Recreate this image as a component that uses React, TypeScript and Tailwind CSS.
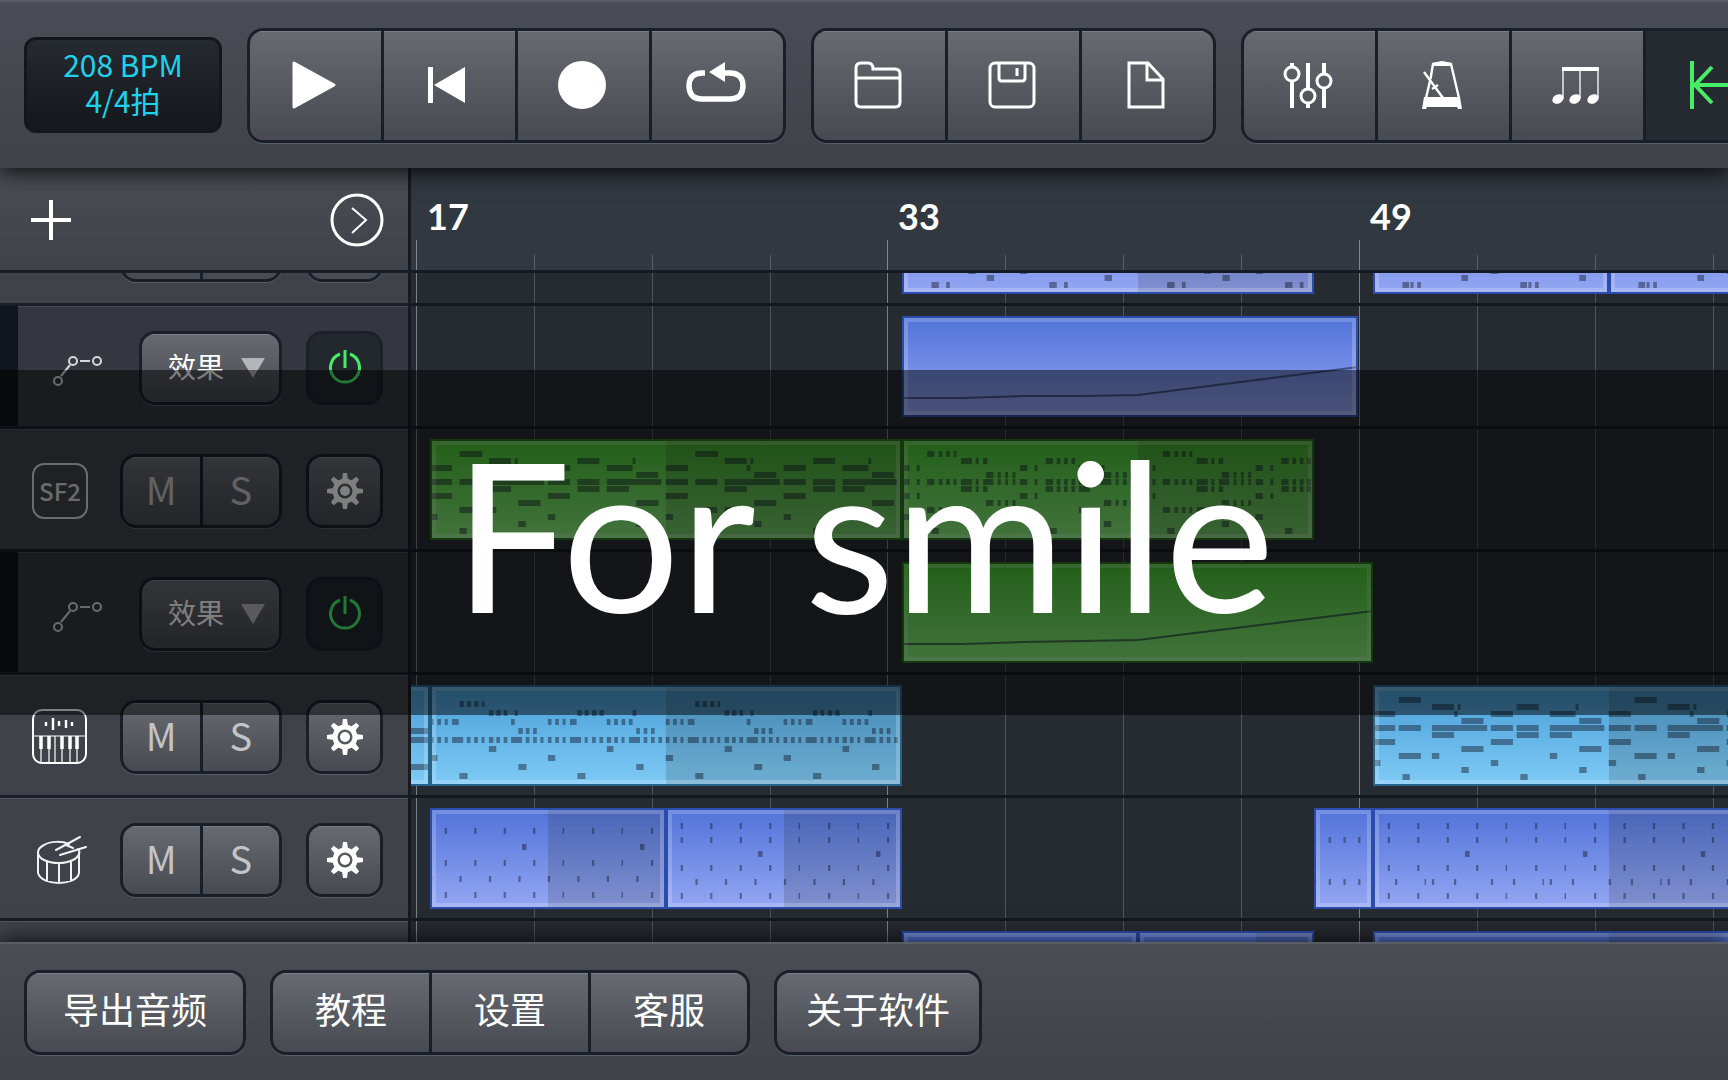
import type { ReactNode } from "react";
import clsx from "clsx";

// one step is a sixteenth of a grid cell; the grid draws a line every 16 steps
const STEP = 7.3667;
const GRID_START = 5;
const CLIP_HEIGHT = 101;

type Color = "blue" | "green" | "cyan";

interface Clip {
  start: number;
  width: number;
  color: Color;
  shadeFrom?: number;
  rows?: string[];
  firstRow?: number;
  rowGap?: number;
  curve?: string;
}

interface Track {
  kind: "sf2" | "piano" | "drum" | "effect";
  clips: Clip[];
}

// each string is one pitch: "step:length step:length ..." over 32 steps
const melody = [
  "4:3.1",
  "8:3 11.5:0.4 20:3 27.5:0.4",
  "0:3 11:0.5 16:3 24:3.5",
  "12:3 28:3",
  "0:3 4:3 8:7.5 16:3 20:3 24:7.4",
  "8:3 20:3 24:3",
  "0:3 16:3",
  "12:3 28:3",
  "4:3 8:1 24:1",
  "0:1 16:1",
  "12:1 28:1",
  "4:1 20:1",
];

const melodyEarly = [
  "3.5:3",
  "8:3 11.5:0.4 19.5:3 27.5:0.4",
  "0:3 11:0.5 16:3 24:3.5",
  "12:3 28:3",
  "0:3 3.5:3 8:7.5 16:3 19.5:3 24:7.4",
  "8:3 19.5:3 24:3",
  "0:3 16:3",
  "12:3 28:3",
  "3.5:3 8:1 24:1",
  "0:1 16:1",
  "12:1 28:1",
  "4:1 20:1",
];

const chopped = [
  "3.4:1 5:0.5 6:0.5 7:0.4",
  "8:1.5 10:0.4 11:0.6 19.5:1 21:0.5 22:0.5 23:0.5",
  "0:1 2:0.4 16:1 18:0.4 24:1.5 26:0.5 27:0.5",
  "11.4:1 13:0.4 14:0.4 15:0.4 27.4:1 29:0.4 30:0.5 31:0.5",
  "0:1 2:0.4 3.4:1 5:0.5 6:0.5 7:0.4 8:1.5 10:0.4 11:1.4 13:0.4 14:0.4 15:0.4 16:1 18:0.4 19.5:1 21:0.5 22:0.5 23:0.5 24:1.5 26:0.5 27:1.4 29:0.4 30:0.5 31:0.5",
  "8:1.5 10:0.4 11:0.6 19.5:1 21:0.5 22:0.5 23:0.5 24:1.5",
  "0:1 2:0.4 16:1 18:0.4",
  "11.4:1 13:0.4 14:0.4 15:0.4 27.4:1 29:0.4 30:0.5 31:0.5",
  "3.4:1 5:0.5 6:0.5 7:0.4 8:1 24:1",
  "0:1 16:1",
  "11.4:1 27.4:1",
  "4:1 20:1",
];

const arp = [
  "4:0.6 5:0.6 6:0.6 7:0.4",
  "8:0.6 9:0.6 10:0.5 11.5:0.4 20:0.6 21:0.5 22:0.6 23:0.6 27.5:0.5",
  "0:0.5 1:0.5 2:0.4 3:0.9 11:0.5 16:0.5 17:0.5 18:0.4 19:0.9 24:0.5 25:0.5 26:0.5 27:0.5",
  "12:0.6 13:0.5 14:0.5 28:0.5 29:0.5 30:0.5",
  "0:0.5 1:0.5 2:0.4 3:1.5 5:0.5 6:0.5 7:0.4 8:0.6 9:0.5 10:0.5 11:1.5 13:0.5 14:0.5 15:0.4 16:0.5 17:0.5 18:0.4 19:1.5 21:0.4 22:0.5 23:0.5 24:0.6 25:0.5 26:0.4 27:1.5 29:0.5 30:0.5 31:0.5",
  "8:1 24:0.9",
  "0:1 16:1",
  "12:1.1 28:1",
  "4:1.1 20:1.1",
];

const sparse = ["", "", "", "", "", "", "", "", "", "9:1 16:1", "11.5:1 27.5:1", "4:1 6:0.5 20:1 22:0.5"];
const sparseTriple = ["", "", "", "", "", "", "", "", "", "16:1", "12:0.9 28:0.9", "4:0.9 5.1:0.4 6:0.5 20:0.9 21.1:0.4 22:0.5"];

const offbeat = "2:0.3 6:0.3 10:0.3 14:0.3 18:0.2 22:0.3 26:0.2 30:0.3";
const onbeat = "0:0.3 4:0.3 8:0.3 12:0.3 16:0.3 20:0.3 24:0.3 28:0.3";
const snare = "12.5:0.6 28.5:0.6";
const drumsA = [offbeat, snare, offbeat, onbeat, offbeat];
const drumsB = [offbeat, offbeat, snare, offbeat, onbeat, offbeat];
const drumsFill = ["", "0:0.3 2:0.3 4:0.3 6:0.3", "", "", "0:0.3 2:0.3 4:0.3 6:0.3", ""];
const drumsC = [offbeat, offbeat, snare, offbeat, "0:0.3 3:0.3 7:0.2 8:0.3 11:0.3 16:0.3 19:0.3 23:0.2 24:0.3 27:0.3", offbeat];

const tracks: Track[] = [
  {
    kind: "sf2",
    clips: [
      { start: 491, width: 412, color: "blue", shadeFrom: 236, rows: sparse },
      { start: 962, width: 236, color: "blue", rows: sparseTriple },
      { start: 1198, width: 472, color: "blue", rows: sparseTriple },
    ],
  },
  {
    kind: "effect",
    clips: [{ start: 491, width: 456, color: "blue", curve: "M0 82 L60 82 L120 80 L180 80 L236 79 L456 51" }],
  },
  {
    kind: "sf2",
    clips: [
      { start: 19, width: 472, color: "green", shadeFrom: 236, rows: melody },
      { start: 491, width: 412, color: "green", shadeFrom: 236, rows: chopped },
    ],
  },
  {
    kind: "effect",
    clips: [{ start: 491, width: 471, color: "green", curve: "M0 82 L60 82 L120 80 L180 79 L236 78 L471 49" }],
  },
  {
    kind: "piano",
    clips: [
      { start: -453, width: 472, color: "cyan", rows: ["", "", "", "44:20", "44:20", "", "", "44:20"], firstRow: 19, rowGap: 9 },
      { start: 19, width: 472, color: "cyan", shadeFrom: 236, rows: arp, firstRow: 19, rowGap: 9 },
      { start: 962, width: 472, color: "cyan", shadeFrom: 236, rows: melodyEarly },
    ],
  },
  {
    kind: "drum",
    clips: [
      { start: 19, width: 236, color: "blue", shadeFrom: 118, rows: drumsA, firstRow: 23, rowGap: 16 },
      { start: 255, width: 236, color: "blue", shadeFrom: 118, rows: drumsB, firstRow: 18, rowGap: 14 },
      { start: 903, width: 59, color: "blue", rows: drumsFill, firstRow: 18, rowGap: 14 },
      { start: 962, width: 472, color: "blue", shadeFrom: 236, rows: drumsC, firstRow: 18, rowGap: 14 },
    ],
  },
  {
    kind: "sf2",
    clips: [
      { start: 491, width: 236, color: "blue" },
      { start: 727, width: 176, color: "blue", shadeFrom: 118 },
      { start: 962, width: 472, color: "blue", shadeFrom: 236 },
    ],
  },
];

const clipStyles: Record<Color, string> = {
  blue: "border-[#2c4cab] bg-linear-to-b from-[#5273d9] to-[#94a6f3]",
  green: "border-[#27701a] bg-linear-to-b from-[#46c030] to-[#84e678]",
  cyan: "border-[#24638c] bg-linear-to-b from-[#489fd8] to-[#7ecaf5]",
};

const face = "bg-linear-to-b from-[#686a71] to-[#474a51] shadow-[inset_0_1px_0_#7d7f86]";
const frame = "flex shrink-0 gap-[3px] overflow-hidden rounded-2xl border-[3px] border-[#191f28] bg-[#191f28] shadow-[0_1px_0_#5a5d64]";

function Icon({ size = 48, children, className }: { size?: number; children: ReactNode; className?: string }) {
  return (
    <svg
      width={size}
      height={size}
      viewBox={`0 0 ${size} ${size}`}
      fill="none"
      stroke="currentColor"
      strokeWidth={3}
      className={clsx("shrink-0 overflow-visible", className)}
      aria-hidden="true"
    >
      {children}
    </svg>
  );
}

const icons = {
  play: (
    <Icon>
      <path d="M4 2 V46 L44 24 Z" fill="currentColor" strokeLinejoin="round" />
    </Icon>
  ),
  rewind: (
    <Icon>
      <path d="M4 6 H9 V42 H4 Z M10 24 L41 6 V42 Z" fill="currentColor" stroke="none" />
    </Icon>
  ),
  record: (
    <Icon>
      <circle cx="24" cy="24" r="24" fill="currentColor" stroke="none" />
    </Icon>
  ),
  loop: (
    <Icon>
      <path d="M13 12 H10 C1 12 -3 17 -3 25 S1 38 10 38 H38 C47 38 51 33 51 25 S47 12 38 12 H30" strokeWidth={5.5} />
      <path d="M17 11 L33 1 V21 Z" fill="currentColor" stroke="none" />
    </Icon>
  ),
  folder: (
    <Icon>
      <path d="M2 7 Q2 2 7 2 H14 Q19 2 19 8 H41 Q46 8 46 13 V41 Q46 46 41 46 H7 Q2 46 2 41 Z M2 17 H46" />
    </Icon>
  ),
  save: (
    <Icon>
      <rect x="2" y="2" width="44" height="44" rx="5" />
      <path d="M11 2 V17 Q11 20 14 20 H34 Q37 20 37 17 V2 M29 7 V15" />
    </Icon>
  ),
  file: (
    <Icon>
      <path d="M7 2 H26 L41 18 V46 H7 Z M25 2 V19 H41" />
    </Icon>
  ),
  mixer: (
    <Icon>
      <path d="M8 2 V6 M8 20 V47 M24 2 V28 M24 42 V47 M40 2 V13 M40 27 V47" strokeWidth={4} />
      <circle cx="8" cy="13" r="7" />
      <circle cx="24" cy="35" r="7" />
      <circle cx="40" cy="20" r="7" />
    </Icon>
  ),
  metronome: (
    <Icon>
      <path d="M12 20 L8 37 M12.5 18 L15 3 L24 2 L33 3 L41 37" strokeWidth={2.4} />
      <path d="M14 2 L24 0 L34 2 V5 H14 Z M6 36 H42 L44 48 H40 L39 46 H9 L8 48 H4 Z" fill="currentColor" stroke="none" />
      <path d="M6 11 L25 37 M14 28 L20 24" strokeWidth={2.4} />
    </Icon>
  ),
  triplet: (
    <Icon>
      <path d="M10 6 H47 V10 H10 Z" fill="currentColor" stroke="none" />
      <path d="M11 8 V37 M28 8 V37 M46 8 V37" strokeWidth={1.3} />
      <g fill="currentColor" stroke="none">
        <ellipse cx="6" cy="38" rx="6" ry="4.4" transform="rotate(-28 6 38)" />
        <ellipse cx="23" cy="38" rx="6" ry="4.4" transform="rotate(-28 23 38)" />
        <ellipse cx="41" cy="38" rx="6" ry="4.4" transform="rotate(-28 41 38)" />
      </g>
    </Icon>
  ),
  snap: (
    <Icon>
      <path d="M6 0 V48 M9 24 H48 M26 6 L9 24 L26 42" strokeWidth={4} />
    </Icon>
  ),
  gear: (
    <Icon size={36}>
      <circle cx="18" cy="18" r="10" strokeWidth={5} />
      <circle cx="18" cy="18" r="5" fill="currentColor" stroke="none" />
      {[0, 45, 90, 135, 180, 225, 270, 315].map((angle) => (
        <path key={angle} d="M15 7 L16 0 H20 L21 7 Z" fill="currentColor" stroke="none" transform={`rotate(${angle} 18 18)`} />
      ))}
    </Icon>
  ),
  power: (
    <Icon size={36}>
      <path d="M13 4 A14.5 14.5 0 1 0 23 4 M18 0 V18" />
    </Icon>
  ),
  curve: (
    <Icon size={56} className="text-[#d5d7da]">
      <g strokeWidth={2}>
        <circle cx="8" cy="41" r="4" />
        <circle cx="23" cy="21" r="4" />
        <circle cx="47" cy="21" r="4" />
        <path d="M11 36 L20 25 M30 21 H40" />
      </g>
    </Icon>
  ),
  piano: (
    <Icon size={56} className="text-white">
      <rect x="1" y="1" width="53" height="53" rx="9" strokeWidth={2} />
      <path d="M1 27 H54 M9 27 V53 M17 27 V53 M23 27 V53 M30 27 V53 M38 27 V53 M45 27 V53" strokeWidth={1.2} />
      <path d="M9 27 V40 M17 27 V40 M30 27 V40 M38 27 V40 M45 27 V40" strokeWidth={3.5} />
      <path d="M14 13 V17 M21 9 V21 M27 12 V17 M34 11 V19 M40 13 V17" strokeWidth={2.4} />
    </Icon>
  ),
  drum: (
    <Icon size={56} className="text-[#f0f1f2]">
      <g strokeWidth={2} strokeLinecap="round">
        <path d="M37 12 C30 9 18 9 12 13 C4 17 4 24 12 28 C20 32 33 32 41 28 C47 25 49 20 46 17" />
        <path d="M6 21 V41 C8 48 18 51 27 51 C35 51 46 48 47 41 V21 M15 29 V49 M27 31 V51 M39 29 V49" />
        <path d="M24 18 L48 5 M28 23 L54 15 M34 13 L41 16" />
      </g>
    </Icon>
  ),
};

function ToolGroup({ items }: { items: { icon: ReactNode; label: string; active?: boolean }[] }) {
  return (
    <div className={clsx(frame, "h-[115px]")}>
      {items.map((item) => (
        <button
          key={item.label}
          type="button"
          aria-label={item.label}
          className={clsx(
            "flex w-[131px] items-center justify-center pr-[3px]",
            item.active ? "bg-[#252930] text-[#46ee67]" : [face, "text-white"]
          )}
        >
          {item.icon}
        </button>
      ))}
    </div>
  );
}

function TrackHeader({ track }: { track: Track }) {
  if (track.kind === "effect") {
    return (
      <div className="flex h-[123px] border-b-[3px] border-[#191f28] bg-[#34373f]">
        <div className="w-[18px] bg-[#0f161d]" />
        <div className="flex flex-1 items-center justify-between pt-[3px] pr-[25px] pl-8 shadow-[inset_0_1px_0_#484b52]">
          {icons.curve}
          <div className="flex gap-6">
            <label className={clsx(frame, "relative h-[74px] w-[143px]")}>
              <select aria-label="效果" className={clsx(face, "w-full appearance-none pb-1 pl-[26px] text-[28px] text-white")}>
                <option>效果</option>
              </select>
              <svg width="24" height="20" viewBox="0 0 24 20" className="pointer-events-none absolute top-6 right-[14px]" aria-hidden="true">
                <path d="M0 0 H24 L12 20 Z" fill="#b4b5b8" />
              </svg>
            </label>
            <button
              type="button"
              aria-label="开关"
              className="flex h-[74px] w-[77px] items-center justify-center rounded-2xl border-[3px] border-[#1b2029] bg-[#23282f] text-[#46ee67]"
            >
              {icons.power}
            </button>
          </div>
        </div>
      </div>
    );
  }

  return (
    <div className="flex h-[123px] items-center justify-between border-b-[3px] border-[#191f28] bg-[#3f4249] pt-[3px] pr-[25px] pl-8 shadow-[inset_0_1px_0_#53565d]">
      {track.kind === "sf2" ? (
        <span className="flex size-14 items-center justify-center rounded-xl border-2 border-[#d5d7da] text-2xl font-medium text-[#d5d7da]">SF2</span>
      ) : (
        icons[track.kind]
      )}
      <div className="flex gap-6">
        <div className={clsx(frame, "h-[74px] w-[162px] text-[38px] text-[#c3c4c7]")}>
          <button type="button" className={clsx(face, "flex-1 pb-1 leading-none")}>M</button>
          <button type="button" className={clsx(face, "flex-1 pb-1 leading-none")}>S</button>
        </div>
        <div className={clsx(frame, "h-[74px] w-[77px] text-white")}>
          <button type="button" aria-label="音轨设置" className={clsx(face, "flex flex-1 items-center justify-center")}>
            {icons.gear}
          </button>
        </div>
      </div>
    </div>
  );
}

function ClipView({ clip }: { clip: Clip }) {
  const { start, width, color, shadeFrom, rows = [], firstRow = 15, rowGap = 7, curve } = clip;
  const repeats = Math.ceil(width / (STEP * 32));

  return (
    <div
      className={clsx("absolute top-[10px] h-[101px] overflow-hidden border-2", clipStyles[color])}
      style={{ left: start, width }}
    >
      <svg className="absolute -top-0.5 -left-0.5" width={width} height={CLIP_HEIGHT} viewBox={`0 0 ${width} ${CLIP_HEIGHT}`} aria-hidden="true">
        {shadeFrom && <rect x={shadeFrom} y="0" width={width - shadeFrom} height={CLIP_HEIGHT} fill="#26221c" opacity="0.17" />}
        {Array.from({ length: repeats }).map((_, repeat) =>
          rows.map((row, i) =>
            row.split(" ").filter(Boolean).map((note) => {
              const [at, length] = note.split(":").map(Number);
              return (
                <rect
                  key={`${repeat}-${i}-${at}`}
                  x={(at + repeat * 32) * STEP}
                  y={firstRow + i * rowGap - 3}
                  width={length * STEP}
                  height={6}
                  fill="#111827"
                  opacity="0.45"
                />
              );
            })
          )
        )}
        {curve && <path d={curve} fill="none" stroke="#1c2238" strokeWidth="2" opacity="0.6" />}
      </svg>
      <div className="absolute inset-0 border-4 border-white/20" />
    </div>
  );
}

function GridLines({ ruler }: { ruler?: boolean }) {
  return (
    <>
      {Array.from({ length: 12 }).map((_, i) => {
        const major = i % 4 === 0;
        return (
          <div
            key={i}
            className={clsx(
              "absolute bottom-0 w-px",
              ruler ? (major ? "h-[30px] bg-white/40" : "h-[15px] bg-white/20") : major ? "h-full bg-white/40" : "h-full bg-white/20"
            )}
            style={{ left: Math.round(GRID_START + i * STEP * 16) }}
          />
        );
      })}
    </>
  );
}

export default function App() {
  return (
    <div className="relative flex h-screen flex-col overflow-hidden bg-[#262a31] font-['Noto_Sans_CJK_SC',sans-serif]">
      <header className="relative z-10 flex h-[168px] shrink-0 items-center gap-[25px] border-t-2 border-[#5a5d66] bg-linear-to-b from-[#4a4d55] to-[#3f4249] px-6 shadow-[0_4px_20px_rgba(0,0,0,0.85)]">
        <button
          type="button"
          className="flex h-24 w-[198px] shrink-0 flex-col items-center justify-center rounded-xl border-[3px] border-[#13171d] bg-linear-to-b from-[#262a31] to-[#14171c] pb-1.5 text-[30px] leading-9 text-[#1dd3ec]"
        >
          <span>208 BPM</span>
          <span>4/4拍</span>
        </button>
        <ToolGroup
          items={[
            { icon: icons.play, label: "播放" },
            { icon: icons.rewind, label: "回到开头" },
            { icon: icons.record, label: "录音" },
            { icon: icons.loop, label: "循环" },
          ]}
        />
        <ToolGroup
          items={[
            { icon: icons.folder, label: "打开" },
            { icon: icons.save, label: "保存" },
            { icon: icons.file, label: "新建" },
          ]}
        />
        <ToolGroup
          items={[
            { icon: icons.mixer, label: "混音台" },
            { icon: icons.metronome, label: "节拍器" },
            { icon: icons.triplet, label: "三连音" },
            { icon: icons.snap, label: "吸附", active: true },
          ]}
        />
      </header>

      <main className="flex min-h-0 flex-1">
        <aside className="flex w-[411px] shrink-0 flex-col border-r-[3px] border-[#161b23]">
          <div className="flex h-[105px] shrink-0 items-center justify-between border-b-[3px] border-[#191f28] bg-linear-to-b from-[#4a4d54] to-[#3f4249] pt-0.5 pr-6 pl-[31px] text-white">
            <button type="button" aria-label="添加音轨">
              <Icon size={40}>
                <path d="M20 0 V40 M0 20 H40" strokeWidth={4} />
              </Icon>
            </button>
            <button type="button" aria-label="展开">
              <Icon size={54}>
                <circle cx="27" cy="27" r="25" />
                <path d="M22 15 L36 27 L22 40" strokeWidth={2} />
              </Icon>
            </button>
          </div>
          <div className="min-h-0 flex-1 overflow-hidden">
            <div className="-mt-[90px]">
              {tracks.map((track, i) => (
                <TrackHeader key={i} track={track} />
              ))}
            </div>
          </div>
        </aside>

        <section className="flex min-w-0 flex-1 flex-col">
          <div className="relative h-[105px] shrink-0 overflow-hidden border-b-[3px] border-[#161b23] bg-[#323840]">
            <GridLines ruler />
            {[17, 33, 49].map((bar, i) => (
              <span
                key={bar}
                className="absolute top-6 font-['Lato',sans-serif] text-4xl leading-12 font-bold text-white"
                style={{ left: Math.round(GRID_START + i * STEP * 64) + 11 }}
              >
                {bar}
              </span>
            ))}
          </div>
          <div className="relative min-h-0 flex-1 overflow-hidden">
            <GridLines />
            <div className="-mt-[90px]">
              {tracks.map((track, i) => (
                <div key={i} className="relative h-[123px] overflow-hidden border-b-[3px] border-[#14181f]">
                  {track.clips.map((clip) => (
                    <ClipView key={clip.start} clip={clip} />
                  ))}
                </div>
              ))}
            </div>
          </div>
        </section>
      </main>

      <footer className="relative z-10 flex h-[138px] shrink-0 items-center gap-6 border-t-2 border-[#5a5d64] bg-linear-to-b from-[#4a4d54] to-[#3f4249] px-6 text-4xl text-white shadow-[0_-2px_20px_rgba(0,0,0,0.8)]">
        <div className={clsx(frame, "h-[85px] w-[222px]")}>
          <button type="button" className={clsx(face, "flex-1 pb-2")}>导出音频</button>
        </div>
        <div className={clsx(frame, "h-[85px] w-[480px]")}>
          <button type="button" className={clsx(face, "flex-1 pb-2")}>教程</button>
          <button type="button" className={clsx(face, "flex-1 pb-2")}>设置</button>
          <button type="button" className={clsx(face, "flex-1 pb-2")}>客服</button>
        </div>
        <div className={clsx(frame, "h-[85px] w-[208px]")}>
          <button type="button" className={clsx(face, "flex-1 pb-2")}>关于软件</button>
        </div>
      </footer>

      <div className="pointer-events-none absolute inset-x-0 top-[370px] z-20 flex h-[345px] items-center justify-center bg-black/50 pb-5">
        <h1 className="font-['Lato',sans-serif] text-[208px] leading-none whitespace-nowrap text-white">For smile</h1>
      </div>
    </div>
  );
}
